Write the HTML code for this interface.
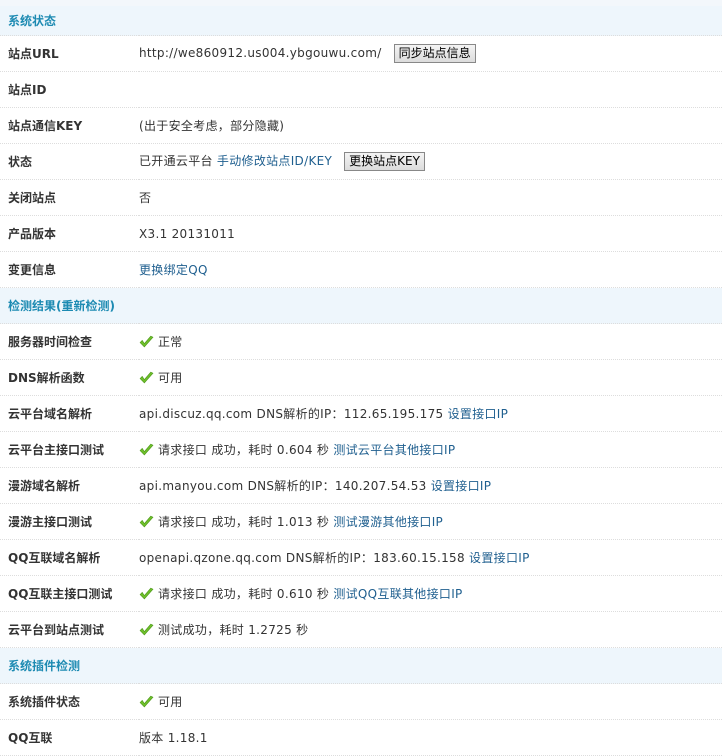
<!DOCTYPE html>
<html><head><meta charset="utf-8"><style>
body{margin:0;background:#fff;font:12px "DejaVu Sans","Noto Sans CJK SC",sans-serif;color:#333;width:722px;overflow:hidden}
.top{height:6px;background:#f3f7fb}
table{border-collapse:collapse;width:722px;table-layout:fixed}
td{height:35px;border-bottom:1px dotted #ddd;padding:0;vertical-align:middle;white-space:nowrap;letter-spacing:.3px}
td.l{padding-left:8px;font-weight:bold;color:#333;letter-spacing:0}
tr.h td{background:#eef6fc;color:#1c8ab2;font-weight:bold;padding-left:8px;height:29px;letter-spacing:0}
tr.h2 td{height:35px}
a{color:#1f5f8f;text-decoration:none}
.btn{display:inline-block;border:1px solid #888;background:linear-gradient(#f4f4f4,#dcdcdc);color:#000;padding:1px 4px;margin-left:12px;font-size:12px;line-height:15px;vertical-align:middle;letter-spacing:0}
.ck{display:inline-block;width:15px;height:13px;vertical-align:-2px;margin-right:4px}
</style></head><body>
<div class="top"></div>
<table>
<colgroup><col style="width:139px"><col></colgroup>
<tr class="h"><td colspan="2">系统状态</td></tr>
<tr><td class="l">站点URL</td><td>http://we860912.us004.ybgouwu.com/<span class="btn">同步站点信息</span></td></tr>
<tr><td class="l">站点ID</td><td></td></tr>
<tr><td class="l">站点通信KEY</td><td>(出于安全考虑，部分隐藏)</td></tr>
<tr><td class="l">状态</td><td>已开通云平台 <a>手动修改站点ID/KEY</a><span class="btn">更换站点KEY</span></td></tr>
<tr><td class="l">关闭站点</td><td>否</td></tr>
<tr><td class="l">产品版本</td><td>X3.1 20131011</td></tr>
<tr><td class="l">变更信息</td><td><a>更换绑定QQ</a></td></tr>
<tr class="h h2"><td colspan="2">检测结果(重新检测)</td></tr>
<tr><td class="l">服务器时间检查</td><td><svg class="ck" viewBox="0 0 14 12"><path d="M1 7l4 4 8-9-2-1-6 7-2-3z" fill="#6fbf2a" stroke="#4e9a1c" stroke-width=".6"/></svg>正常</td></tr>
<tr><td class="l">DNS解析函数</td><td><svg class="ck" viewBox="0 0 14 12"><path d="M1 7l4 4 8-9-2-1-6 7-2-3z" fill="#6fbf2a" stroke="#4e9a1c" stroke-width=".6"/></svg>可用</td></tr>
<tr><td class="l">云平台域名解析</td><td>api.discuz.qq.com DNS解析的IP：112.65.195.175 <a>设置接口IP</a></td></tr>
<tr><td class="l">云平台主接口测试</td><td><svg class="ck" viewBox="0 0 14 12"><path d="M1 7l4 4 8-9-2-1-6 7-2-3z" fill="#6fbf2a" stroke="#4e9a1c" stroke-width=".6"/></svg>请求接口 成功，耗时 0.604 秒 <a>测试云平台其他接口IP</a></td></tr>
<tr><td class="l">漫游域名解析</td><td>api.manyou.com DNS解析的IP：140.207.54.53 <a>设置接口IP</a></td></tr>
<tr><td class="l">漫游主接口测试</td><td><svg class="ck" viewBox="0 0 14 12"><path d="M1 7l4 4 8-9-2-1-6 7-2-3z" fill="#6fbf2a" stroke="#4e9a1c" stroke-width=".6"/></svg>请求接口 成功，耗时 1.013 秒 <a>测试漫游其他接口IP</a></td></tr>
<tr><td class="l">QQ互联域名解析</td><td>openapi.qzone.qq.com DNS解析的IP：183.60.15.158 <a>设置接口IP</a></td></tr>
<tr><td class="l">QQ互联主接口测试</td><td><svg class="ck" viewBox="0 0 14 12"><path d="M1 7l4 4 8-9-2-1-6 7-2-3z" fill="#6fbf2a" stroke="#4e9a1c" stroke-width=".6"/></svg>请求接口 成功，耗时 0.610 秒 <a>测试QQ互联其他接口IP</a></td></tr>
<tr><td class="l">云平台到站点测试</td><td><svg class="ck" viewBox="0 0 14 12"><path d="M1 7l4 4 8-9-2-1-6 7-2-3z" fill="#6fbf2a" stroke="#4e9a1c" stroke-width=".6"/></svg>测试成功，耗时 1.2725 秒</td></tr>
<tr class="h h2"><td colspan="2">系统插件检测</td></tr>
<tr><td class="l">系统插件状态</td><td><svg class="ck" viewBox="0 0 14 12"><path d="M1 7l4 4 8-9-2-1-6 7-2-3z" fill="#6fbf2a" stroke="#4e9a1c" stroke-width=".6"/></svg>可用</td></tr>
<tr><td class="l">QQ互联</td><td>版本 1.18.1</td></tr>
</table>
</body></html>
